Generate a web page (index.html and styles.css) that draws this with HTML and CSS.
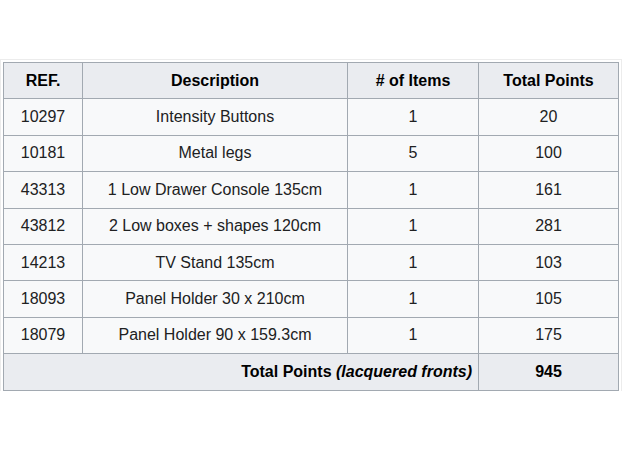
FILE: index.html
```html
<!DOCTYPE html>
<html>
<head>
<meta charset="utf-8">
<link rel="stylesheet" href="styles.css">
</head>
<body>
<table class="wikitable">
  <colgroup>
    <col class="c-ref">
    <col class="c-desc">
    <col class="c-items">
    <col class="c-points">
  </colgroup>
  <thead>
    <tr><th>REF.</th><th>Description</th><th># of Items</th><th>Total Points</th></tr>
  </thead>
  <tbody>
    <tr><td>10297</td><td>Intensity Buttons</td><td>1</td><td>20</td></tr>
    <tr><td>10181</td><td>Metal legs</td><td>5</td><td>100</td></tr>
    <tr><td>43313</td><td>1 Low Drawer Console 135cm</td><td>1</td><td>161</td></tr>
    <tr><td>43812</td><td>2 Low boxes + shapes 120cm</td><td>1</td><td>281</td></tr>
    <tr><td>14213</td><td>TV Stand 135cm</td><td>1</td><td>103</td></tr>
    <tr><td>18093</td><td>Panel Holder 30 x 210cm</td><td>1</td><td>105</td></tr>
    <tr><td>18079</td><td>Panel Holder 90 x 159.3cm</td><td>1</td><td>175</td></tr>
    <tr class="total"><th colspan="3" class="total-label">Total Points <i>(lacquered fronts)</i></th><th>945</th></tr>
  </tbody>
</table>
</body>
</html>
```
FILE: styles.css
```css
html, body {
  margin: 0;
  padding: 0;
  background: #ffffff;
}
body {
  padding: 62px 0 0 3px;
  font-family: "Liberation Sans", Arial, sans-serif;
  font-size: 16px;
  color: #202122;
}
.wikitable {
  border-collapse: collapse;
  table-layout: fixed;
  width: 615px;
  background: #f8f9fa;
  border: 1px solid #a2a9b1;
  box-shadow: 0 0 0 2px #fff, 0 0 0 3px #ececec;
}
.c-ref { width: 79px; }
.c-desc { width: 265px; }
.c-items { width: 131px; }
.c-points { width: 140px; }
.wikitable th,
.wikitable td {
  border: 1px solid #a2a9b1;
  padding: 0 6px;
  height: 35.4px;
  text-align: center;
  line-height: 18px;
  white-space: nowrap;
}
.wikitable th {
  background: #eaecf0;
  font-weight: bold;
  color: #000;
}
.wikitable td {
  color: #202122;
}
.wikitable th.total-label {
  text-align: right;
}
```
